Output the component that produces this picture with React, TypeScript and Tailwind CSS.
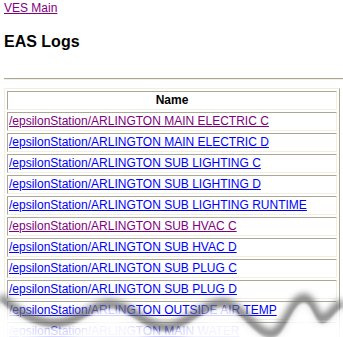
const rows = [
  { name: 'ARLINGTON MAIN ELECTRIC C', visited: true },
  { name: 'ARLINGTON MAIN ELECTRIC D', visited: false },
  { name: 'ARLINGTON SUB LIGHTING C', visited: false },
  { name: 'ARLINGTON SUB LIGHTING D', visited: false },
  { name: 'ARLINGTON SUB LIGHTING RUNTIME', visited: false },
  { name: 'ARLINGTON SUB HVAC C', visited: true },
  { name: 'ARLINGTON SUB HVAC D', visited: false },
  { name: 'ARLINGTON SUB PLUG C', visited: false },
  { name: 'ARLINGTON SUB PLUG D', visited: false },
  { name: 'ARLINGTON OUTSIDE AIR TEMP', visited: false },
  { name: 'ARLINGTON MAIN WATER', visited: false },
]

function TornEdge() {
  const wave =
    'M0,294 C20,312 40,322 60,320 C80,318 95,300 110,301 C130,302 145,324 165,324 C185,324 205,300 222,300 C240,300 255,331 271,331 C285,331 292,295 304,295 C312,295 315,316 322,316 C330,316 336,302 343,300'
  return (
    <svg
      className="pointer-events-none absolute left-0 top-0"
      width="343"
      height="337"
      viewBox="0 0 343 337"
    >
      <defs>
        <filter id="blur" x="-10%" y="-50%" width="120%" height="200%">
          <feGaussianBlur stdDeviation="3" />
        </filter>
        <filter id="soft" x="-10%" y="-50%" width="120%" height="200%">
          <feGaussianBlur stdDeviation="1.2" />
        </filter>
      </defs>
      <path d={wave} transform="translate(0,3)" fill="none" stroke="#707070" strokeOpacity="0.85" strokeWidth="9" filter="url(#blur)" />
      <path d={`${wave} L343,337 L0,337 Z`} transform="translate(0,8)" fill="#ffffff" fillOpacity="0.8" filter="url(#soft)" />
      <path d={`${wave} L343,337 L0,337 Z`} transform="translate(0,18)" fill="#ffffff" fillOpacity="0.75" filter="url(#blur)" />
    </svg>
  )
}

export default function App() {
  return (
    <div className="relative h-[337px] w-[343px] overflow-hidden bg-white pl-1 pt-[1px] font-['Liberation_Sans',Arial,sans-serif] text-[12px] leading-[14px] text-black">
      <div>
        <a href="#" className="text-[#800080] underline">
          VES Main
        </a>
      </div>
      <h1 className="mt-[18px] text-[16px] font-bold leading-[18px]">EAS Logs</h1>
      <div className="mt-[27px] h-[2px] w-[400px] border-t border-b border-t-[#aca899] border-b-[#f1efe2]" />
      <table className="mt-[8px] w-[336px] border-separate border-spacing-[2px] border border-t-[#f1efe2] border-l-[#f1efe2] border-r-[#aca899] border-b-[#aca899] text-[12px] leading-[15px]">
        <thead>
          <tr>
            <th className="border border-t-[#aca899] border-l-[#aca899] border-r-[#f1efe2] border-b-[#f1efe2] p-[1px] text-center font-bold">
              Name
            </th>
          </tr>
        </thead>
        <tbody>
          {rows.map((row) => (
            <tr key={row.name}>
              <td className="border border-t-[#aca899] border-l-[#aca899] border-r-[#f1efe2] border-b-[#f1efe2] p-[1px] text-left">
                <a
                  href="#"
                  className={row.visited ? 'text-[#800080] underline' : 'text-[#0000ff] underline'}
                >
                  /epsilonStation/{row.name}
                </a>
              </td>
            </tr>
          ))}
        </tbody>
      </table>
      <TornEdge />
    </div>
  )
}
